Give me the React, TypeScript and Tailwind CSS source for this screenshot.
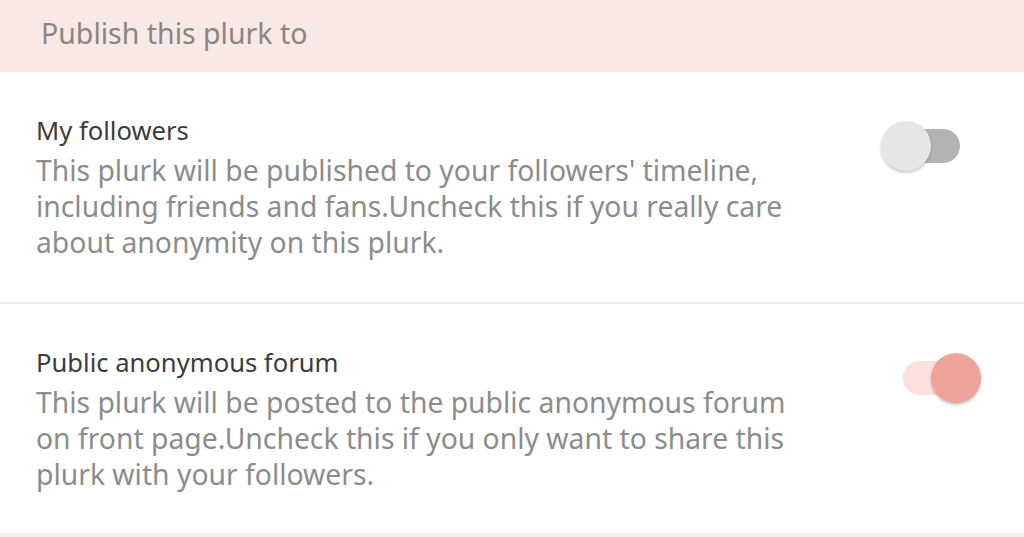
import React, { useState } from 'react';

type Option = { key: string; title: string; lines: string[]; on: boolean };

const OPTIONS: Option[] = [
  {
    key: 'followers',
    title: 'My followers',
    lines: [
      "This plurk will be published to your followers' timeline,",
      'including friends and fans.Uncheck this if you really care',
      'about anonymity on this plurk.',
    ],
    on: false,
  },
  {
    key: 'forum',
    title: 'Public anonymous forum',
    lines: [
      'This plurk will be posted to the public anonymous forum',
      'on front page.Uncheck this if you only want to share this',
      'plurk with your followers.',
    ],
    on: true,
  },
];

function Toggle({ on, onClick }: { on: boolean; onClick: () => void }) {
  return (
    <button onClick={onClick} className="relative w-[100px] h-[52px] shrink-0">
      <div
        className={`absolute top-[9px] left-[22px] h-[34px] w-[57px] rounded-full ${
          on ? 'bg-[#fbe0de]' : 'bg-[#b3b3b3]'
        }`}
      />
      <div
        className={`absolute top-[1px] w-[50px] h-[50px] rounded-full shadow-[0_2px_3px_rgba(0,0,0,0.22)] ${
          on ? 'left-[50px] bg-[#eea39b]' : 'left-0 bg-[#e6e6e6]'
        }`}
      />
    </button>
  );
}

export default function App() {
  const [opts, setOpts] = useState(OPTIONS);

  return (
    <div className="w-[1024px] h-[537px] overflow-hidden bg-white font-['Noto_Sans',sans-serif]">
      <div className="h-[72px] bg-[#f8e9e7] pl-[41px] pt-[14px]">
        <span className="block text-[28.5px] leading-[38px] text-[#8a8583]">Publish this plurk to</span>
      </div>

      {opts.map((o, i) => (
        <div
          key={o.key}
          className={`flex items-start justify-between ${
            i === 0 ? 'h-[232px] border-b-2 border-[#f6ecea]' : 'h-[233px] border-b-4 border-[#f7ece6]'
          }`}
        >
          <div className="pl-[36px] pt-[40px]">
            <p className="text-[25.6px] leading-[38px] text-[#3c3c3c]">{o.title}</p>
            <div className="mt-[2px]">
              {o.lines.map((l) => (
                <p key={l} className="text-[28.3px] leading-[36px] text-[#8c8c8c] whitespace-nowrap">
                  {l}
                </p>
              ))}
            </div>
          </div>
          <div className="pr-[43px] pt-[48px]">
            <Toggle
              on={o.on}
              onClick={() =>
                setOpts(opts.map((x) => (x.key === o.key ? { ...x, on: !x.on } : x)))
              }
            />
          </div>
        </div>
      ))}
    </div>
  );
}
